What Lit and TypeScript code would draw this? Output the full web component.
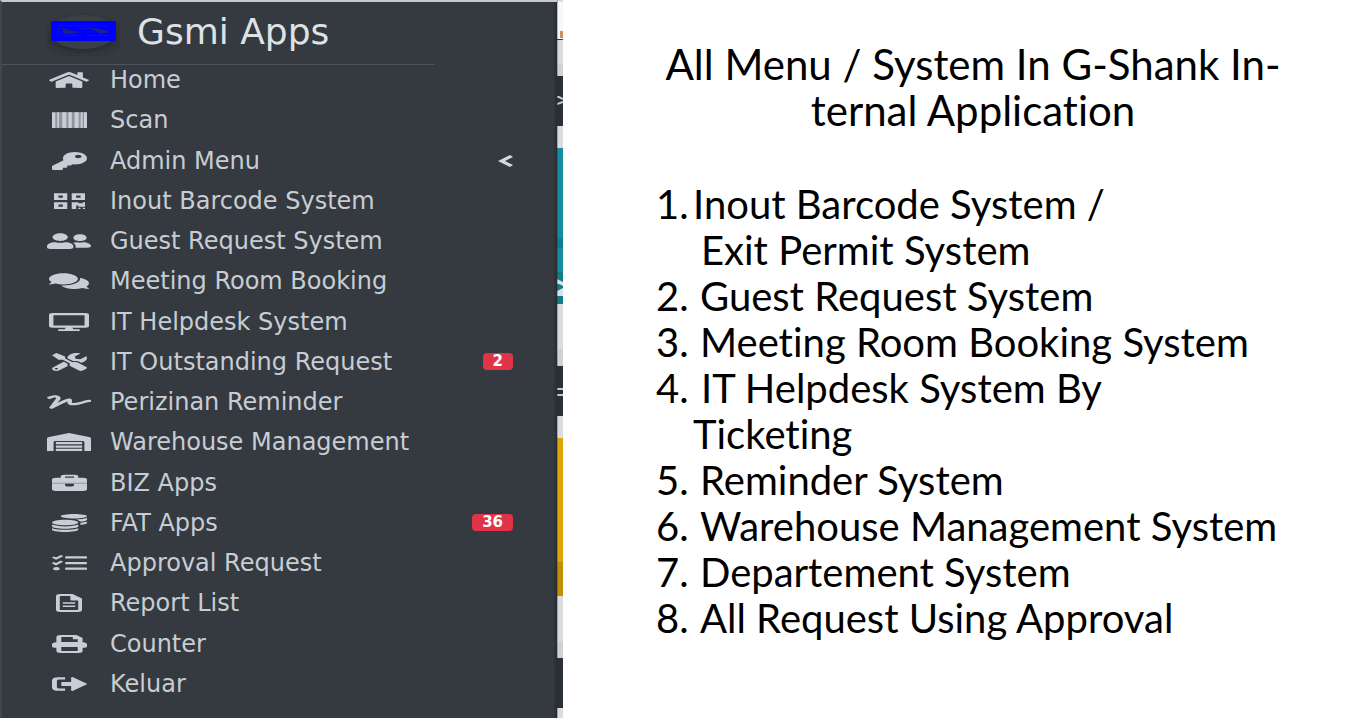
import { LitElement, html, css, svg } from "lit";
import { customElement } from "lit/decorators.js";

interface Glyph {
  width: number;
  shape: unknown;
}

const solid = (width: number, d: string): Glyph => ({ width, shape: svg`<path d=${d} />` });

const glyphs: Record<string, Glyph> = {
  home: solid(576, "M280.37 148.26L96 300.11V464a16 16 0 0 0 16 16l112.06-.29a16 16 0 0 0 15.92-16V368a16 16 0 0 1 16-16h64a16 16 0 0 1 16 16v95.64a16 16 0 0 0 16 16.05L464 480a16 16 0 0 0 16-16V300L295.67 148.26a12.19 12.19 0 0 0-15.3 0zM571.6 251.47L488 182.56V44.05a12 12 0 0 0-12-12h-56a12 12 0 0 0-12 12v72.61L318.47 43a48 48 0 0 0-61 0L4.34 251.47a12 12 0 0 0-1.6 16.9l25.5 31A12 12 0 0 0 45.15 301l235.22-193.74a12.19 12.19 0 0 1 15.3 0L530.9 301a12 12 0 0 0 16.9-1.6l25.5-31a12 12 0 0 0-1.7-16.93z"),
  barcode: {
    width: 512,
    shape: svg`<g><path opacity=".62" d="M50 32h430v448H50z" /><path d="M0 32h52v448H0zM76 32h26v448H76zM150 32h60v448h-60zM240 32h50v448h-50zM330 32h60v448h-60zM420 32h28v448h-28zM468 32h44v448h-44z" /></g>`,
  },
  key: solid(512, "M512 176.001C512 273.203 433.202 352 336 352c-11.22 0-22.19-1.062-32.827-3.069l-24.012 27.014A23.999 23.999 0 0 1 261.223 384H224v40c0 13.255-10.745 24-24 24h-40v40c0 13.255-10.745 24-24 24H24c-13.255 0-24-10.745-24-24v-78.059c0-6.365 2.529-12.47 7.029-16.971l161.802-161.802C163.108 213.814 160 195.271 160 176 160 78.798 238.797.001 335.999 0 433.488-.001 512 78.511 512 176.001zM336 128c0 26.51 21.49 48 48 48s48-21.49 48-48-21.49-48-48-48-48 21.49-48 48z"),
  qrcode: solid(448, "M0 224h192V32H0v192zM64 96h64v64H64V96zm192-64v192h192V32H256zm128 128h-64V96h64v64zM0 480h192V288H0v192zm64-128h64v64H64v-64zm352-64h32v128h-96v-32h-32v96h-64V288h96v32h64v-32zm0 160h32v32h-32v-32zm-64 0h32v32h-32v-32z"),
  guests: solid(640, "M192 256c61.9 0 112-50.1 112-112S253.9 32 192 32 80 82.1 80 144s50.1 112 112 112zm76.8 32h-8.3c-20.8 10-43.9 16-68.5 16s-47.6-6-68.5-16h-8.3C51.6 288 0 339.6 0 403.2V432c0 26.5 21.5 48 48 48h288c26.5 0 48-21.5 48-48v-28.8c0-63.6-51.6-115.2-115.2-115.2zM480 256c53 0 96-43 96-96s-43-96-96-96-96 43-96 96 43 96 96 96zm48 32h-3.8c-13.9 4.8-28.6 8-44.2 8s-30.3-3.2-44.2-8H432c-20.4 0-39.2 5.9-55.7 15.4 24.4 26.3 39.7 61.2 39.7 99.8v38.4c0 2.2-.5 4.3-.6 6.4H592c26.5 0 48-21.5 48-48 0-61.9-50.1-112-112-112z"),
  comments: solid(576, "M416 192c0-88.4-93.1-160-208-160S0 103.6 0 192c0 34.3 14.1 65.9 38 92-13.4 30.2-35.5 54.2-35.8 54.5-2.2 2.3-2.8 5.7-1.5 8.7S4.8 352 8 352c36.6 0 66.9-12.3 88.7-25 32.2 15.7 70.3 25 111.3 25 114.9 0 208-71.6 208-160zm122 220c23.9-26 38-57.7 38-92 0-66.9-53.5-124.2-129.3-148.1.9 6.6 1.3 13.3 1.3 20.1 0 105.9-107.7 192-240 192-10.8 0-21.3-.8-31.7-1.9C207.8 439.6 281.8 480 368 480c41 0 79.1-9.2 111.3-25 21.8 12.7 52.1 25 88.7 25 3.2 0 6.1-1.9 7.3-4.8 1.3-2.9.7-6.3-1.5-8.7-.3-.3-22.4-24.2-35.8-54.5z"),
  desktop: solid(576, "M528 0H48C21.5 0 0 21.5 0 48v320c0 26.5 21.5 48 48 48h192l-16 48h-72c-13.3 0-24 10.7-24 24s10.7 24 24 24h272c13.3 0 24-10.7 24-24s-10.7-24-24-24h-72l-16-48h192c26.5 0 48-21.5 48-48V48c0-26.5-21.5-48-48-48zm-16 352H64V64h448v288z"),
  tools: solid(512, "M501.1 395.7L384 278.6c-23.1-23.1-57.6-27.6-85.4-13.9L192 158.1V96L64 0 0 64l96 128h62.1l106.6 106.6c-13.6 27.8-9.2 62.3 13.9 85.4l117.1 117.1c14.6 14.6 38.2 14.6 52.7 0l52.7-52.7c14.5-14.6 14.5-38.2 0-52.7zM331.7 225c28.3 0 54.9 11 74.9 31l19.4 19.4c15.8-6.9 30.8-16.5 43.8-29.5 37.1-37.1 49.7-89.3 37.9-136.7-2.2-9-13.5-12.1-20.1-5.5l-74.4 74.4-67.9-11.3L334 98.9l74.4-74.4c6.6-6.6 3.4-17.9-5.7-20.2-47.4-11.7-99.6.9-136.6 37.9-28.5 28.5-41.9 66.1-41.2 103.6l82.1 82.1c8.1-1.9 16.5-2.9 24.7-2.9zm-103.9 82l-56.7-56.7L18.7 402.8c-25 25-25 65.5 0 90.5s65.5 25 90.5 0l123.6-123.6c-7.6-19.9-9.9-41.6-5-62.7zM64 472c-13.2 0-24-10.8-24-24 0-13.3 10.7-24 24-24s24 10.7 24 24c0 13.2-10.7 24-24 24z"),
  signature: solid(640, "M623.2 192c-51.8 3.5-125.7 54.7-163.1 71.5-29.1 13.1-54.2 24.4-76.1 24.4-22.6 0-26-16.2-21.3-51.9 1.1-8 11.7-79.2-42.7-76.1-25.1 1.5-64.3 24.8-169.5 126L192 182.2c30.4-75.9-53.2-151.5-129.7-102.8L7.4 116.3C0 121-2.2 130.9 2.5 138.4l17.2 27c4.7 7.5 14.6 9.7 22.1 4.9l58-38.9c18.4-11.7 40.7 7.2 32.7 27.1L34.3 404.1C27.5 421 37 448 64 448c8.3 0 16.5-3.2 22.6-9.4 42.2-42.2 154.7-150.7 211.2-195.8-2.2 28.5-2.1 58.9 20.6 83.8 15.3 16.8 37.3 25.3 65.5 25.3 35.6 0 68-14.6 102.3-30 33-14.8 99-62.6 138.4-65.8 8.5-.7 15.2-7.3 15.2-15.8v-32.1c.2-9.1-7.5-16.8-16.6-16.2z"),
  warehouse: solid(640, "M504 352H136.4c-4.4 0-8 3.6-8 8l-.1 48c0 4.4 3.6 8 8 8H504c4.4 0 8-3.6 8-8v-48c0-4.4-3.6-8-8-8zm0 96H136.1c-4.4 0-8 3.6-8 8l-.1 48c0 4.4 3.6 8 8 8h368c4.4 0 8-3.6 8-8v-48c0-4.4-3.6-8-8-8zm0-192H136.6c-4.4 0-8 3.6-8 8l-.1 48c0 4.4 3.6 8 8 8H504c4.4 0 8-3.6 8-8v-48c0-4.4-3.6-8-8-8zm106.5-139L338.4 3.7a48.15 48.15 0 0 0-36.9 0L29.5 117C11.7 124.5 0 141.9 0 161.3V504c0 4.4 3.6 8 8 8h80c4.4 0 8-3.6 8-8V256c0-17.6 14.6-32 32.6-32h382.8c18 0 32.6 14.4 32.6 32v248c0 4.4 3.6 8 8 8h80c4.4 0 8-3.6 8-8V161.3c0-19.4-11.7-36.8-29.5-44.3z"),
  briefcase: {
    width: 512,
    shape: svg`<path fill-rule="evenodd" d="M128 108V66q0-48 48-48h160q48 0 48 48v42h72q56 0 56 56v260q0 56-56 56H56q-56 0-56-56V164q0-56 56-56zM190 74v34h132V74zM190 280v30q0 44 66 44t66-44v-30z" /><path opacity=".35" fill="#343a40" d="M0 250h512v24H0z" />`,
  },
  coins: solid(512, "M0 405.3V448c0 35.3 86 64 192 64s192-28.7 192-64v-42.7C342.7 434.4 267.2 448 192 448S41.3 434.4 0 405.3zM320 128c106 0 192-28.7 192-64S426 0 320 0 128 28.7 128 64s86 64 192 64zM0 300.4V352c0 35.3 86 64 192 64s192-28.7 192-64v-51.6c-41.3 34-116.9 51.6-192 51.6S41.3 334.4 0 300.4zm416 11c57.3-11.1 96-31.7 96-55.4v-42.7c-23.2 16.4-57.3 27.6-96 34.5v63.6zM192 160C86 160 0 195.8 0 240s86 80 192 80 192-35.8 192-80-86-80-192-80zm219.3 56.3c60-10.8 100.7-32 100.7-56.3v-42.7c-35.5 25.1-96.5 38.6-160.7 41.8 29.5 14.3 51.2 33.5 60 57.2z"),
  tasks: solid(512, "M139.61 35.5a12 12 0 0 0-17 0L58.93 98.81l-22.7-22.12a12 12 0 0 0-17 0L3.53 92.41a12 12 0 0 0 0 17l47.59 47.4a12.78 12.78 0 0 0 17.61 0l15.59-15.62L156.52 69a12.09 12.09 0 0 0 .09-17zm0 159.19a12 12 0 0 0-17 0l-63.68 63.72-22.7-22.1a12 12 0 0 0-17 0L3.53 252a12 12 0 0 0 0 17L51 316.5a12.77 12.77 0 0 0 17.6 0l15.7-15.69 72.2-72.22a12 12 0 0 0 .09-16.9zM64 368c-26.49 0-48.59 21.5-48.59 48S37.53 464 64 464a48 48 0 0 0 0-96zm432 16H208a16 16 0 0 0-16 16v32a16 16 0 0 0 16 16h288a16 16 0 0 0 16-16v-32a16 16 0 0 0-16-16zm0-320H208a16 16 0 0 0-16 16v32a16 16 0 0 0 16 16h288a16 16 0 0 0 16-16V80a16 16 0 0 0-16-16zm0 160H208a16 16 0 0 0-16 16v32a16 16 0 0 0 16 16h288a16 16 0 0 0 16-16v-32a16 16 0 0 0-16-16z"),
  report: {
    width: 384,
    shape: svg`<path fill-rule="evenodd" d="M64 0h180l140 130v318q0 64-64 64H64q-64 0-64-64V64Q0 0 64 0zM72 56q-16 0-16 16v368q0 16 16 16h240q16 0 16-16V184h-92q-24 0-24-24V56zM100 232h184v44H100zM100 328h184v44H100z" />`,
  },
  printer: {
    width: 512,
    shape: svg`<path fill-rule="evenodd" d="M64 208V64Q64 0 128 0h230l90 84v124q64 4 64 64v56q0 32-32 32h-32v88q0 64-64 64H128q-64 0-64-64v-88H32q-32 0-32-32v-56q0-60 64-64zM136 60v140h240v-76h-56q-16 0-16-16V60zM136 344v108h240V344z" />`,
  },
  exit: {
    width: 512,
    shape: svg`<path d="M192 64v64H104q-32 0-32 32v192q0 32 32 32h88v64H96q-96 0-96-96V160q0-96 96-96z" /><path d="M152 196h128V84q0-36 28-20l196 176q16 16 0 32L308 448q-28 16-28-20V316H152q-16 0-16-16v-88q0-16 16-16z" />`,
  },
};

interface MenuEntry {
  icon: string;
  label: string;
  badge?: number;
  expandable?: boolean;
}

const menu: MenuEntry[] = [
  { icon: "home", label: "Home" },
  { icon: "barcode", label: "Scan" },
  { icon: "key", label: "Admin Menu", expandable: true },
  { icon: "qrcode", label: "Inout Barcode System" },
  { icon: "guests", label: "Guest Request System" },
  { icon: "comments", label: "Meeting Room Booking" },
  { icon: "desktop", label: "IT Helpdesk System" },
  { icon: "tools", label: "IT Outstanding Request", badge: 2 },
  { icon: "signature", label: "Perizinan Reminder" },
  { icon: "warehouse", label: "Warehouse Management" },
  { icon: "briefcase", label: "BIZ Apps" },
  { icon: "coins", label: "FAT Apps", badge: 36 },
  { icon: "tasks", label: "Approval Request" },
  { icon: "report", label: "Report List" },
  { icon: "printer", label: "Counter" },
  { icon: "exit", label: "Keluar" },
];

@customElement("app-menu")
export class AppMenu extends LitElement {
  static styles = css`
    :host {
      display: flex;
      flex-direction: column;
      box-sizing: border-box;
      min-width: 0;
      border-top: 2px solid #c6cacd;
      border-left: 2px solid #40464c;
      background: linear-gradient(to left, #272c31, #343a40 4px);
      color: #c8cdd4;
      font-family: "DejaVu Sans", Verdana, sans-serif;
    }
    .brand {
      display: flex;
      align-items: center;
      gap: 16px;
      box-sizing: border-box;
      height: 63px;
      margin-right: 122px;
      padding: 0 0 2px 43px;
      border-bottom: 1px solid #4b545c;
      color: #dfe2e5;
      font-size: 36px;
      line-height: 40px;
      text-decoration: none;
      white-space: nowrap;
    }
    .logo {
      flex: none;
      width: 76px;
      height: 48px;
    }
    .list {
      display: flex;
      flex: 1;
      flex-direction: column;
      justify-content: space-between;
      margin: 0;
      padding: 0 44px 19px 45px;
      list-style: none;
    }
    .link {
      display: flex;
      align-items: center;
      height: 30px;
      color: inherit;
      font-size: 24px;
      line-height: 30px;
      text-decoration: none;
      white-space: nowrap;
    }
    .slot {
      display: flex;
      flex: none;
      justify-content: center;
      width: 44px;
      margin-right: 19px;
    }
    .icon {
      height: 18px;
      fill: #c8cdd6;
    }
    .label {
      flex: 1;
    }
    .badge {
      padding: 0 10px;
      border-radius: 4px;
      background: #e03448;
      color: #fff;
      font-size: 15px;
      font-weight: 700;
      line-height: 17px;
    }
    .chevron {
      width: 15px;
      height: 12px;
      fill: #d5d9dc;
    }
  `;

  private renderIcon(name: string) {
    const { width, shape } = glyphs[name];
    return html`<svg
      class="icon"
      width=${Math.round((width * 44) / 640)}
      viewBox="0 0 ${width} 512"
      preserveAspectRatio="none"
      aria-hidden="true"
    >${shape}</svg>`;
  }

  render() {
    return html`
      <a class="brand" href="#">
        <svg class="logo" viewBox="0 0 76 48" aria-hidden="true">
          <defs>
            <filter id="soft" x="-30%" y="-40%" width="160%" height="180%"><feGaussianBlur stdDeviation="4" /></filter>
          </defs>
          <ellipse cx="38" cy="28" rx="34" ry="15" fill="#1c2024" opacity=".8" filter="url(#soft)" />
          <ellipse cx="38" cy="24" rx="33" ry="17" fill="#3a4046" />
          <rect x="6" y="13" width="65" height="20" rx="2" fill="#0000fe" />
          <path d="M14 17.500h46M14 17.500v10h22M60 17.500v3M42 27.500h22v-6M16 20l20 5M34 20h12l18 3.500" fill="none" stroke="#1414b4" />
          <path d="M17 20l15 5-13 1zM44 20l12 1 8 3-8 2z" fill="#1c2480" />
        </svg>
        <span>Gsmi Apps</span>
      </a>
      <ul class="list">
        ${menu.map(
          (entry) => html`<li>
            <a class="link" href="#">
              <span class="slot">${this.renderIcon(entry.icon)}</span>
              <span class="label">${entry.label}</span>
              ${entry.badge ? html`<span class="badge">${entry.badge}</span>` : ""}
              ${entry.expandable
                ? html`<svg class="chevron" viewBox="0 0 15 12" aria-hidden="true"><path d="M0 6L12 0l3 2-8 4 8 4-3 2z" /></svg>`
                : ""}
            </a>
          </li>`
        )}
      </ul>
    `;
  }
}

interface Note {
  lines: string[];
  kind?: string;
}

const notes: Note[] = [
  { lines: ["Inout Barcode System /", "Exit Permit System"], kind: "tight" },
  { lines: ["Guest Request System"] },
  { lines: ["Meeting Room Booking System"] },
  { lines: ["IT Helpdesk System By", "Ticketing"], kind: "outdent" },
  { lines: ["Reminder System"] },
  { lines: ["Warehouse Management System"] },
  { lines: ["Departement System"] },
  { lines: ["All Request Using Approval"] },
];

@customElement("app-root")
export class AppRoot extends LitElement {
  static styles = css`
    :host {
      display: grid;
      grid-template-columns: 557fr 6px 803fr;
      min-height: 100vh;
      background: #fff;
    }
    .edge-cell {
      position: relative;
    }
    .edge {
      position: absolute;
      inset: 0;
      width: 100%;
      height: 100%;
    }
    .notes {
      box-sizing: border-box;
      min-width: 0;
      padding: 41px 76px 0 93px;
      color: #000;
      font-family: "Comic Sans MS", Lato, sans-serif;
      font-size: 40px;
      font-variant-ligatures: none;
      line-height: 46px;
      white-space: nowrap;
    }
    .title {
      margin: 0 0 48px;
      font-size: 42px;
      font-weight: 400;
      text-align: center;
    }
    .items {
      margin: 0;
      padding: 0;
      list-style: none;
    }
    .item {
      display: flex;
    }
    .number {
      flex: none;
      width: 44px;
    }
    .line {
      display: block;
    }
    .tight .number,
    .outdent .number {
      width: 37px;
    }
    .tight .line + .line {
      padding-left: 8px;
    }
    .outdent .line:first-child {
      padding-left: 8px;
    }
  `;

  render() {
    return html`
      <app-menu></app-menu>
      <div class="edge-cell">
        <svg class="edge" viewBox="0 0 6 718" preserveAspectRatio="none" aria-hidden="true">
          <path fill="#dddcdc" d="M0 0h6v718H0z" />
          <path fill="#f7f7f7" d="M0 2h6v37H0z" />
          <path fill="#cb9158" d="M3 31h3v7H3z" />
          <path fill="#33383c" d="M0 39h6v1H0z" />
          <path fill="#cfd1d4" d="M0 64h6v12H0zM0 349h6v17H0zM0 641h6v17H0z" />
          <path fill="#2a3035" d="M0 76h6v50H0zM0 366h6v50H0zM0 658h6v50H0z" />
          <path fill="none" stroke="#c3c8cf" stroke-width="2" d="M0 97h2l4 2M0 104l6-2M0 389h6M0 395h6" />
          <path fill="#158b9d" d="M0 148h6v156H0z" />
          <path fill="#127c8c" d="M0 239h6v9H0zM0 272h6v32H0z" />
          <path fill="#d9e0e1" d="M0 279l6 3v4l-4-2-2 0zM0 291l6-3v8H0z" />
          <path fill="#dba507" d="M0 438h6v124H0z" />
          <path fill="#c19006" d="M0 562h6v34H0z" />
          <path fill="#20252a" opacity=".3" d="M0 0h1v718H0z" />
        </svg>
      </div>
      <main class="notes">
        <h1 class="title">All Menu / System In G-Shank In-<br />ternal Application</h1>
        <ol class="items">
          ${notes.map(
            ({ lines, kind = "" }, i) => html`<li class="item ${kind}">
              <span class="number">${i + 1}.</span>
              <span>${lines.map((line) => html`<span class="line">${line}</span>`)}</span>
            </li>`
          )}
        </ol>
      </main>
    `;
  }
}
